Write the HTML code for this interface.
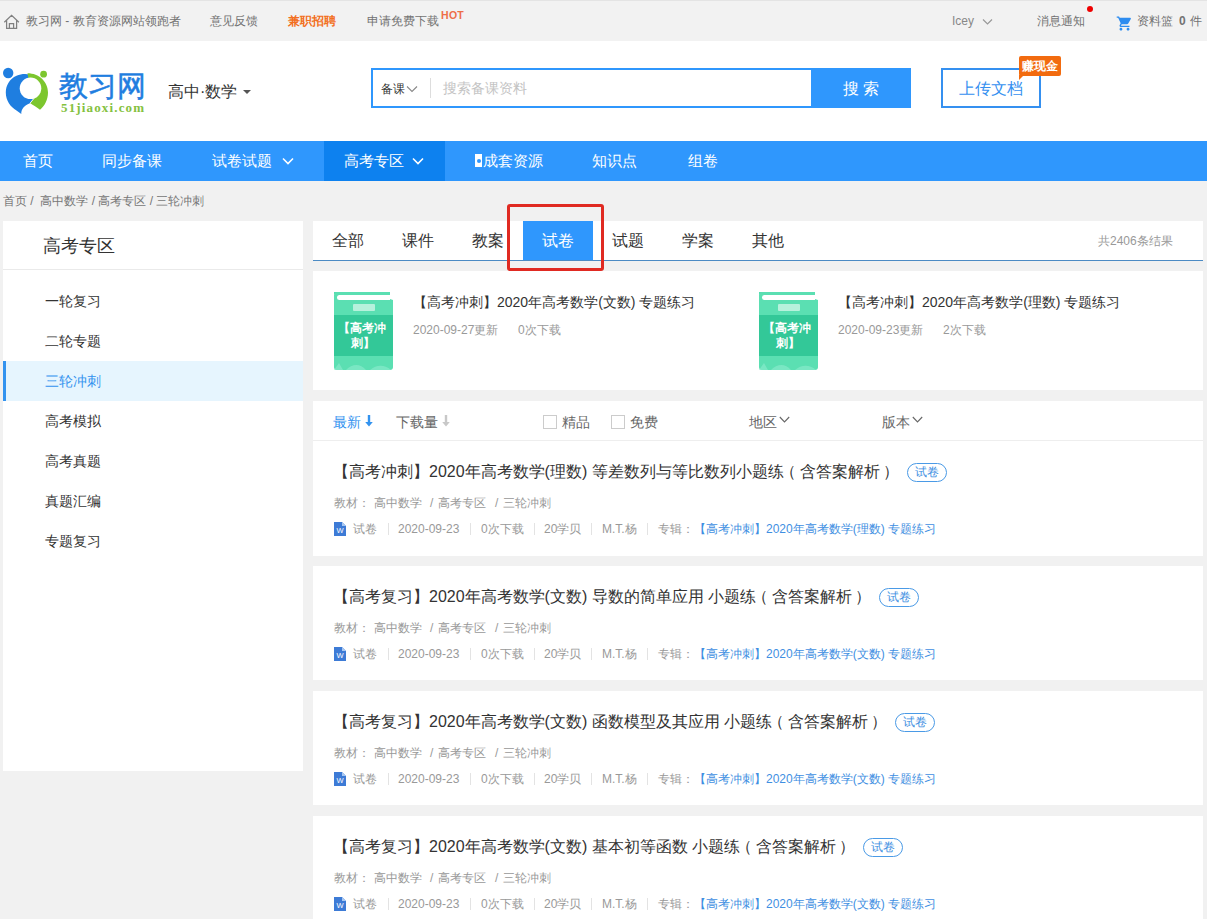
<!DOCTYPE html>
<html><head><meta charset="utf-8">
<style>
*{margin:0;padding:0;box-sizing:border-box}
html,body{width:1207px;height:919px;overflow:hidden;background:#f1f1f1;font-family:"Liberation Sans",sans-serif;color:#333}
.a{position:absolute;white-space:nowrap}
#top{position:absolute;left:0;top:0;width:1207px;height:41px;background:#f2f2f2;border-top:1px solid #e4e4e4}
#top .t{position:absolute;top:0;height:41px;line-height:41px;font-size:12px;color:#737373}
#hdr{position:absolute;left:0;top:41px;width:1207px;height:100px;background:#fff}
#nav{position:absolute;left:0;top:141px;width:1207px;height:40px;background:#2f97fd}
#nav .n{position:absolute;top:0;height:40px;line-height:40px;font-size:15px;color:#fff}
.panel{position:absolute;background:#fff}
</style></head><body>

<div id="top">
  <svg class="a" style="left:0;top:8px" width="30" height="26" viewBox="0 0 30 26"><path d="M4.3 13.2 L11.6 6.4 L18.9 13.2 M6.6 11.2 V19.3 H16.6 V11.2 M9.4 19.3 V14.6 H13.6 V19.3" fill="none" stroke="#808080" stroke-width="1.25"/></svg>
  <div class="t" style="left:26px">教习网 - 教育资源网站领跑者</div>
  <div class="t" style="left:210px">意见反馈</div>
  <div class="t" style="left:288px;color:#f26f21;font-weight:bold">兼职招聘</div>
  <div class="t" style="left:367px">申请免费下载</div>
  <div class="a" style="left:441px;top:7.8px;font-size:10.5px;line-height:12px;font-weight:bold;letter-spacing:0.3px;color:#ee6e48">HOT</div>
  <div class="t" style="left:952px;color:#888">Icey</div>
  <svg class="a" style="left:982px;top:17px" width="11" height="8" viewBox="0 0 11 8"><path d="M1 1.5 L5.5 6 L10 1.5" fill="none" stroke="#999" stroke-width="1.2"/></svg>
  <div class="t" style="left:1037px">消息通知</div>
  <div class="a" style="left:1087px;top:5px;width:6px;height:6px;border-radius:50%;background:#e00"></div>
  <svg class="a" style="left:1116px;top:13.5px" width="17" height="17" viewBox="0 0 24 24"><path fill="#2d8cf0" d="M7 18c-1.1 0-1.99.9-1.99 2S5.9 22 7 22s2-.9 2-2-.9-2-2-2zM1 2v2h2l3.6 7.59-1.35 2.45c-.16.28-.25.61-.25.96 0 1.1.9 2 2 2h12v-2H7.42c-.14 0-.25-.11-.25-.25l.03-.12.9-1.63h7.450c.75 0 1.41-.41 1.75-1.03l3.58-6.49c.08-.14.12-.31.12-.48 0-.55-.45-1-1-1H5.21l-.94-2H1zm16 16c-1.1 0-1.99.9-1.99 2s.89 2 1.99 2 2-.9 2-2-.9-2-2-2z"/></svg>
  <div class="t" style="left:1137px">资料篮</div><div class="t" style="left:1179px;font-weight:bold">0</div><div class="t" style="left:1190px">件</div>
</div>

<div id="hdr">
  <svg class="a" style="left:0;top:21px" width="52" height="56" viewBox="0 0 52 56">
    <path d="M34 14 C28.5 11.3 22 11.3 16.5 13.8 C9.5 17 5.8 23.5 5.8 30.5 C5.8 38.5 10.5 45 16.5 48.5 L21.3 52 C21 47.5 24 43.5 29.8 41.2 L34.5 35.5 L30 26 Z" fill="#1f7ee0"/>
    <path d="M27.5 11.2 C39 11.3 48 19.5 48 30.5 C48 38 44.5 44 40 47.8 C37 45.5 33 43 30.3 41.3 L34.5 35.5 L30 26 Z" fill="#7cc62e"/>
    <circle cx="30.5" cy="26.3" r="10.8" fill="#fff"/>
    <path d="M34.5 35.8 L30.2 41" stroke="#fff" stroke-width="0.8"/>
    <circle cx="8.2" cy="11" r="5.2" fill="#1f7ee0"/>
    <circle cx="43.6" cy="12.2" r="3.4" fill="#7cc62e"/>
  </svg>
  <div class="a" style="left:59px;top:29px;font-size:28.5px;line-height:32px;color:#1f7ee0;letter-spacing:0px;-webkit-text-stroke:0.5px #1f7ee0">教习网</div>
  <div class="a" style="left:61px;top:59.5px;font-family:'Liberation Serif',serif;font-weight:bold;font-size:13px;line-height:14px;letter-spacing:1.15px;color:#84c13e">51jiaoxi.com</div>
  <div class="a" style="left:168px;top:41px;font-size:16px;line-height:20px;color:#333">高中·数学</div>
  <div class="a" style="left:243px;top:49px;width:0;height:0;border-left:4px solid transparent;border-right:4px solid transparent;border-top:4px solid #555"></div>
  <div class="a" style="left:371px;top:27px;width:540px;height:40px;border:2px solid #2f97fd;background:#fff"></div>
  <div class="a" style="left:381px;top:40px;font-size:12px;line-height:16px;color:#333">备课</div>
  <svg class="a" style="left:406px;top:44px" width="12" height="8" viewBox="0 0 12 8"><path d="M1 1.5 L6 6.5 L11 1.5" fill="none" stroke="#888" stroke-width="1.1"/></svg>
  <div class="a" style="left:430px;top:37px;width:1px;height:20px;background:#ddd"></div>
  <div class="a" style="left:443px;top:38px;font-size:14px;line-height:18px;color:#c4c4c4">搜索备课资料</div>
  <div class="a" style="left:811px;top:27px;width:100px;height:40px;background:#2f97fd;color:#fff;font-size:16px;line-height:42px;text-align:center;letter-spacing:4px;padding-left:4px">搜索</div>
  <div class="a" style="left:941px;top:27px;width:100px;height:40px;border:2px solid #3590f0;color:#3590f0;font-size:16px;line-height:38px;text-align:center">上传文档</div>
  <div class="a" style="left:1019px;top:15px;width:42px;height:20px;background:#f26b0f;border-radius:2px;color:#fff;font-size:12px;line-height:20px;text-align:center;font-weight:bold">赚现金</div>
  <div class="a" style="left:1019px;top:34px;width:0;height:0;border-top:5px solid #f26b0f;border-right:5px solid transparent"></div>
</div>

<div id="nav">
  <div class="n" style="left:23px">首页</div>
  <div class="n" style="left:102px">同步备课</div>
  <div class="n" style="left:212px">试卷试题</div>
  <svg class="a" style="left:282px;top:16px" width="12" height="8" viewBox="0 0 12 8"><path d="M1 1.5 L6 6.5 L11 1.5" fill="none" stroke="#fff" stroke-width="1.6"/></svg>
  <div class="a" style="left:324px;top:0;width:121px;height:40px;background:#0d81ef"></div>
  <div class="n" style="left:344px">高考专区</div>
  <svg class="a" style="left:412px;top:16px" width="12" height="8" viewBox="0 0 12 8"><path d="M1 1.5 L6 6.5 L11 1.5" fill="none" stroke="#fff" stroke-width="1.6"/></svg>
  <div class="a" style="left:475px;top:13px;width:7px;height:13px;background:#fff"></div><div class="a" style="left:476.5px;top:17.5px;width:4px;height:4px;border-radius:50%;background:#2f97fd"></div>
  <div class="n" style="left:483px">成套资源</div>
  <div class="n" style="left:592px">知识点</div>
  <div class="n" style="left:688px">组卷</div>
</div>

<div class="a" style="left:3px;top:193px;font-size:12px;line-height:16px;color:#777">首页 / &nbsp;高中数学 / 高考专区 / 三轮冲刺</div>


<!-- sidebar -->
<div class="panel" style="left:3px;top:221px;width:300px;height:550px">
<div class="a" style="left:40px;top:14px;font-size:18px;line-height:22px;color:#333;">高考专区</div>
<div class="a" style="left:0;top:48px;width:300px;height:1px;background:#eaeaea"></div>
<div class="a" style="left:42px;top:72px;font-size:14px;line-height:16px;color:#333;">一轮复习</div>
<div class="a" style="left:42px;top:112px;font-size:14px;line-height:16px;color:#333;">二轮专题</div>
<div class="a" style="left:0;top:140px;width:300px;height:40px;background:#e6f5fe;border-left:3px solid #3393ef"></div>
<div class="a" style="left:42px;top:152px;font-size:14px;line-height:16px;color:#3393ef;">三轮冲刺</div>
<div class="a" style="left:42px;top:192px;font-size:14px;line-height:16px;color:#333;">高考模拟</div>
<div class="a" style="left:42px;top:232px;font-size:14px;line-height:16px;color:#333;">高考真题</div>
<div class="a" style="left:42px;top:272px;font-size:14px;line-height:16px;color:#333;">真题汇编</div>
<div class="a" style="left:42px;top:312px;font-size:14px;line-height:16px;color:#333;">专题复习</div>
</div>
<div class="panel" style="left:313px;top:221px;width:890px;height:40px;border-bottom:1px solid #4c8bc4">
<div class="a" style="left:210px;top:0px;width:70px;height:39px;background:#2f97fd"></div>
<div class="a" style="left:19px;top:11px;font-size:16px;line-height:18px;color:#333;">全部</div>
<div class="a" style="left:89px;top:11px;font-size:16px;line-height:18px;color:#333;">课件</div>
<div class="a" style="left:159px;top:11px;font-size:16px;line-height:18px;color:#333;">教案</div>
<div class="a" style="left:229px;top:11px;font-size:16px;line-height:18px;color:#fff;">试卷</div>
<div class="a" style="left:299px;top:11px;font-size:16px;line-height:18px;color:#333;">试题</div>
<div class="a" style="left:369px;top:11px;font-size:16px;line-height:18px;color:#333;">学案</div>
<div class="a" style="left:439px;top:11px;font-size:16px;line-height:18px;color:#333;">其他</div>
<div class="a" style="left:785px;top:13px;font-size:12px;line-height:14px;color:#999;">共2406条结果</div>
</div>
<div class="a" style="left:507px;top:204px;width:97px;height:67px;border:3px solid #e02a22;border-radius:3px"></div>
<div class="panel" style="left:313px;top:271px;width:890px;height:119px">
<div class="a" style="left:21px;top:21px;width:59px;height:78px">
    <div class="a" style="left:0;top:0;width:56px;height:2px;background:#52dcae"></div>
    <div class="a" style="left:0;top:0;width:59px;height:78px;background:#5bdfb2;border-radius:3px 4px 3px 3px;clip-path:polygon(0 0,56px 0,56px 7px,59px 8px,59px 78px,0 78px)"></div>
    <div class="a" style="left:3px;top:2.5px;width:53px;height:5px;background:#fff;border-radius:3px 0 0 3px"></div>
    <div class="a" style="left:0;top:23px;width:59px;height:41px;background:#33c898"></div>
    <div class="a" style="left:19px;top:12px;width:22px;height:7px;background:#d6f7ea;opacity:.75;border-radius:1px"></div>
    <div class="a" style="left:-2px;top:29px;width:59px;font-size:12px;line-height:15px;color:#fff;text-align:center;white-space:normal;font-weight:bold">【高考冲<br>&nbsp;刺】</div>
    <svg class="a" style="left:0;top:64px" width="59" height="14" viewBox="0 0 59 14"><path d="M0 14 L5 7 L9 14 Z M12 14 C18 8 26 7 32 14 Z M36 14 C42 9 50 8 57 14 Z" fill="#86eacb" opacity=".7"/></svg>
  </div>
<div class="a" style="left:100px;top:22px;font-size:14px;line-height:18px;color:#333;">【高考冲刺】2020年高考数学(文数) 专题练习</div>
<div class="a" style="left:100px;top:52px;font-size:12px;line-height:14px;color:#999;">2020-09-27更新</div>
<div class="a" style="left:205px;top:52px;font-size:12px;line-height:14px;color:#999;">0次下载</div>
<div class="a" style="left:446px;top:21px;width:59px;height:78px">
    <div class="a" style="left:0;top:0;width:56px;height:2px;background:#52dcae"></div>
    <div class="a" style="left:0;top:0;width:59px;height:78px;background:#5bdfb2;border-radius:3px 4px 3px 3px;clip-path:polygon(0 0,56px 0,56px 7px,59px 8px,59px 78px,0 78px)"></div>
    <div class="a" style="left:3px;top:2.5px;width:53px;height:5px;background:#fff;border-radius:3px 0 0 3px"></div>
    <div class="a" style="left:0;top:23px;width:59px;height:41px;background:#33c898"></div>
    <div class="a" style="left:19px;top:12px;width:22px;height:7px;background:#d6f7ea;opacity:.75;border-radius:1px"></div>
    <div class="a" style="left:-2px;top:29px;width:59px;font-size:12px;line-height:15px;color:#fff;text-align:center;white-space:normal;font-weight:bold">【高考冲<br>&nbsp;刺】</div>
    <svg class="a" style="left:0;top:64px" width="59" height="14" viewBox="0 0 59 14"><path d="M0 14 L5 7 L9 14 Z M12 14 C18 8 26 7 32 14 Z M36 14 C42 9 50 8 57 14 Z" fill="#86eacb" opacity=".7"/></svg>
  </div>
<div class="a" style="left:525px;top:22px;font-size:14px;line-height:18px;color:#333;">【高考冲刺】2020年高考数学(理数) 专题练习</div>
<div class="a" style="left:525px;top:52px;font-size:12px;line-height:14px;color:#999;">2020-09-23更新</div>
<div class="a" style="left:630px;top:52px;font-size:12px;line-height:14px;color:#999;">2次下载</div>
</div>
<div class="panel" style="left:313px;top:401px;width:890px;height:155px">
<div class="a" style="left:20px;top:13px;font-size:14px;line-height:16px;color:#3393ef;">最新</div>
<svg class="a" style="left:52px;top:14px" width="8" height="12" viewBox="0 0 8 12"><path d="M2.8 0 H5.2 V7 H7.8 L4 11.5 L0.2 7 H2.8 Z" fill="#3393ef"/></svg>
<div class="a" style="left:83px;top:13px;font-size:14px;line-height:16px;color:#666;">下载量</div>
<svg class="a" style="left:129px;top:14px" width="8" height="12" viewBox="0 0 8 12"><path d="M2.8 0 H5.2 V7 H7.8 L4 11.5 L0.2 7 H2.8 Z" fill="#c8c8c8"/></svg>
<div class="a" style="left:230px;top:14px;width:14px;height:14px;border:1px solid #ccc;background:#fff"></div>
<div class="a" style="left:249px;top:13px;font-size:14px;line-height:16px;color:#666;">精品</div>
<div class="a" style="left:298px;top:14px;width:14px;height:14px;border:1px solid #ccc;background:#fff"></div>
<div class="a" style="left:317px;top:13px;font-size:14px;line-height:16px;color:#666;">免费</div>
<div class="a" style="left:436px;top:13px;font-size:14px;line-height:16px;color:#666;">地区</div>
<svg class="a" style="left:466px;top:15px" width="11" height="8" viewBox="0 0 11 8"><path d="M0.8 1 L5.5 6 L10.2 1" fill="none" stroke="#666" stroke-width="1.1"/></svg>
<div class="a" style="left:569px;top:13px;font-size:14px;line-height:16px;color:#666;">版本</div>
<svg class="a" style="left:599px;top:15px" width="11" height="8" viewBox="0 0 11 8"><path d="M0.8 1 L5.5 6 L10.2 1" fill="none" stroke="#666" stroke-width="1.1"/></svg>
<div class="a" style="left:0;top:39px;width:890px;height:1px;background:#eee"></div>
<div class="a" style="left:20px;top:61px;font-size:16px;line-height:20px;color:#333;">【高考冲刺】2020年高考数学(理数) 等差数列与等比数列小题练<span style="position:relative;left:-4px">（</span>含答案解析<span style="position:relative;left:3px">）</span></div>
<div class="a" style="left:594px;top:62px;width:40px;height:19px;border:1px solid #4a9ae6;border-radius:10px;font-size:12px;line-height:17px;color:#3f8fe2;text-align:center">试卷</div>
<div class="a" style="left:21px;top:95px;font-size:12px;line-height:14px;color:#999;">教材：</div>
<div class="a" style="left:61px;top:95px;font-size:12px;line-height:14px;color:#999;">高中数学</div>
<div class="a" style="left:117px;top:95px;font-size:12px;line-height:14px;color:#999;">/</div>
<div class="a" style="left:125px;top:95px;font-size:12px;line-height:14px;color:#999;">高考专区</div>
<div class="a" style="left:182px;top:95px;font-size:12px;line-height:14px;color:#999;">/</div>
<div class="a" style="left:190px;top:95px;font-size:12px;line-height:14px;color:#999;">三轮冲刺</div>
<svg class="a" style="left:21px;top:121px" width="12" height="14" viewBox="0 0 12 14"><path d="M0 0 H8 L12 4 V14 H0 Z" fill="#3d7bd6"/><path d="M8 0 L12 4 H8 Z" fill="#a9c8f2"/><text x="6" y="10.6" font-size="7.5" font-family="Liberation Sans" fill="#fff" text-anchor="middle">W</text></svg>
<div class="a" style="left:40px;top:121px;font-size:12px;line-height:14px;color:#999;">试卷</div>
<div class="a" style="left:85px;top:121px;font-size:12px;line-height:14px;color:#999;">2020-09-23</div>
<div class="a" style="left:168px;top:121px;font-size:12px;line-height:14px;color:#999;">0次下载</div>
<div class="a" style="left:231px;top:121px;font-size:12px;line-height:14px;color:#999;">20学贝</div>
<div class="a" style="left:289px;top:121px;font-size:12px;line-height:14px;color:#999;">M.T.杨</div>
<div class="a" style="left:345px;top:121px;font-size:12px;line-height:14px;color:#999;">专辑：</div>
<div class="a" style="left:75px;top:122px;width:1px;height:12px;background:#e3e3e3"></div>
<div class="a" style="left:157px;top:122px;width:1px;height:12px;background:#e3e3e3"></div>
<div class="a" style="left:221px;top:122px;width:1px;height:12px;background:#e3e3e3"></div>
<div class="a" style="left:278px;top:122px;width:1px;height:12px;background:#e3e3e3"></div>
<div class="a" style="left:334px;top:122px;width:1px;height:12px;background:#e3e3e3"></div>
<div class="a" style="left:381px;top:121px;font-size:12px;line-height:14px;color:#3f8fe2;">【高考冲刺】2020年高考数学(理数) 专题练习</div>
</div>
<div class="panel" style="left:313px;top:566px;width:890px;height:114px">
<div class="a" style="left:20px;top:21px;font-size:16px;line-height:20px;color:#333;">【高考复习】2020年高考数学(文数) 导数的简单应用 小题练<span style="position:relative;left:-4px">（</span>含答案解析<span style="position:relative;left:3px">）</span></div>
<div class="a" style="left:566px;top:22px;width:40px;height:19px;border:1px solid #4a9ae6;border-radius:10px;font-size:12px;line-height:17px;color:#3f8fe2;text-align:center">试卷</div>
<div class="a" style="left:21px;top:55px;font-size:12px;line-height:14px;color:#999;">教材：</div>
<div class="a" style="left:61px;top:55px;font-size:12px;line-height:14px;color:#999;">高中数学</div>
<div class="a" style="left:117px;top:55px;font-size:12px;line-height:14px;color:#999;">/</div>
<div class="a" style="left:125px;top:55px;font-size:12px;line-height:14px;color:#999;">高考专区</div>
<div class="a" style="left:182px;top:55px;font-size:12px;line-height:14px;color:#999;">/</div>
<div class="a" style="left:190px;top:55px;font-size:12px;line-height:14px;color:#999;">三轮冲刺</div>
<svg class="a" style="left:21px;top:81px" width="12" height="14" viewBox="0 0 12 14"><path d="M0 0 H8 L12 4 V14 H0 Z" fill="#3d7bd6"/><path d="M8 0 L12 4 H8 Z" fill="#a9c8f2"/><text x="6" y="10.6" font-size="7.5" font-family="Liberation Sans" fill="#fff" text-anchor="middle">W</text></svg>
<div class="a" style="left:40px;top:81px;font-size:12px;line-height:14px;color:#999;">试卷</div>
<div class="a" style="left:85px;top:81px;font-size:12px;line-height:14px;color:#999;">2020-09-23</div>
<div class="a" style="left:168px;top:81px;font-size:12px;line-height:14px;color:#999;">0次下载</div>
<div class="a" style="left:231px;top:81px;font-size:12px;line-height:14px;color:#999;">20学贝</div>
<div class="a" style="left:289px;top:81px;font-size:12px;line-height:14px;color:#999;">M.T.杨</div>
<div class="a" style="left:345px;top:81px;font-size:12px;line-height:14px;color:#999;">专辑：</div>
<div class="a" style="left:75px;top:82px;width:1px;height:12px;background:#e3e3e3"></div>
<div class="a" style="left:157px;top:82px;width:1px;height:12px;background:#e3e3e3"></div>
<div class="a" style="left:221px;top:82px;width:1px;height:12px;background:#e3e3e3"></div>
<div class="a" style="left:278px;top:82px;width:1px;height:12px;background:#e3e3e3"></div>
<div class="a" style="left:334px;top:82px;width:1px;height:12px;background:#e3e3e3"></div>
<div class="a" style="left:381px;top:81px;font-size:12px;line-height:14px;color:#3f8fe2;">【高考冲刺】2020年高考数学(文数) 专题练习</div>
</div>
<div class="panel" style="left:313px;top:691px;width:890px;height:114px">
<div class="a" style="left:20px;top:21px;font-size:16px;line-height:20px;color:#333;">【高考复习】2020年高考数学(文数) 函数模型及其应用 小题练<span style="position:relative;left:-4px">（</span>含答案解析<span style="position:relative;left:3px">）</span></div>
<div class="a" style="left:582px;top:22px;width:40px;height:19px;border:1px solid #4a9ae6;border-radius:10px;font-size:12px;line-height:17px;color:#3f8fe2;text-align:center">试卷</div>
<div class="a" style="left:21px;top:55px;font-size:12px;line-height:14px;color:#999;">教材：</div>
<div class="a" style="left:61px;top:55px;font-size:12px;line-height:14px;color:#999;">高中数学</div>
<div class="a" style="left:117px;top:55px;font-size:12px;line-height:14px;color:#999;">/</div>
<div class="a" style="left:125px;top:55px;font-size:12px;line-height:14px;color:#999;">高考专区</div>
<div class="a" style="left:182px;top:55px;font-size:12px;line-height:14px;color:#999;">/</div>
<div class="a" style="left:190px;top:55px;font-size:12px;line-height:14px;color:#999;">三轮冲刺</div>
<svg class="a" style="left:21px;top:81px" width="12" height="14" viewBox="0 0 12 14"><path d="M0 0 H8 L12 4 V14 H0 Z" fill="#3d7bd6"/><path d="M8 0 L12 4 H8 Z" fill="#a9c8f2"/><text x="6" y="10.6" font-size="7.5" font-family="Liberation Sans" fill="#fff" text-anchor="middle">W</text></svg>
<div class="a" style="left:40px;top:81px;font-size:12px;line-height:14px;color:#999;">试卷</div>
<div class="a" style="left:85px;top:81px;font-size:12px;line-height:14px;color:#999;">2020-09-23</div>
<div class="a" style="left:168px;top:81px;font-size:12px;line-height:14px;color:#999;">0次下载</div>
<div class="a" style="left:231px;top:81px;font-size:12px;line-height:14px;color:#999;">20学贝</div>
<div class="a" style="left:289px;top:81px;font-size:12px;line-height:14px;color:#999;">M.T.杨</div>
<div class="a" style="left:345px;top:81px;font-size:12px;line-height:14px;color:#999;">专辑：</div>
<div class="a" style="left:75px;top:82px;width:1px;height:12px;background:#e3e3e3"></div>
<div class="a" style="left:157px;top:82px;width:1px;height:12px;background:#e3e3e3"></div>
<div class="a" style="left:221px;top:82px;width:1px;height:12px;background:#e3e3e3"></div>
<div class="a" style="left:278px;top:82px;width:1px;height:12px;background:#e3e3e3"></div>
<div class="a" style="left:334px;top:82px;width:1px;height:12px;background:#e3e3e3"></div>
<div class="a" style="left:381px;top:81px;font-size:12px;line-height:14px;color:#3f8fe2;">【高考冲刺】2020年高考数学(文数) 专题练习</div>
</div>
<div class="panel" style="left:313px;top:816px;width:890px;height:114px">
<div class="a" style="left:20px;top:21px;font-size:16px;line-height:20px;color:#333;">【高考复习】2020年高考数学(文数) 基本初等函数 小题练<span style="position:relative;left:-4px">（</span>含答案解析<span style="position:relative;left:3px">）</span></div>
<div class="a" style="left:550px;top:22px;width:40px;height:19px;border:1px solid #4a9ae6;border-radius:10px;font-size:12px;line-height:17px;color:#3f8fe2;text-align:center">试卷</div>
<div class="a" style="left:21px;top:55px;font-size:12px;line-height:14px;color:#999;">教材：</div>
<div class="a" style="left:61px;top:55px;font-size:12px;line-height:14px;color:#999;">高中数学</div>
<div class="a" style="left:117px;top:55px;font-size:12px;line-height:14px;color:#999;">/</div>
<div class="a" style="left:125px;top:55px;font-size:12px;line-height:14px;color:#999;">高考专区</div>
<div class="a" style="left:182px;top:55px;font-size:12px;line-height:14px;color:#999;">/</div>
<div class="a" style="left:190px;top:55px;font-size:12px;line-height:14px;color:#999;">三轮冲刺</div>
<svg class="a" style="left:21px;top:81px" width="12" height="14" viewBox="0 0 12 14"><path d="M0 0 H8 L12 4 V14 H0 Z" fill="#3d7bd6"/><path d="M8 0 L12 4 H8 Z" fill="#a9c8f2"/><text x="6" y="10.6" font-size="7.5" font-family="Liberation Sans" fill="#fff" text-anchor="middle">W</text></svg>
<div class="a" style="left:40px;top:81px;font-size:12px;line-height:14px;color:#999;">试卷</div>
<div class="a" style="left:85px;top:81px;font-size:12px;line-height:14px;color:#999;">2020-09-23</div>
<div class="a" style="left:168px;top:81px;font-size:12px;line-height:14px;color:#999;">0次下载</div>
<div class="a" style="left:231px;top:81px;font-size:12px;line-height:14px;color:#999;">20学贝</div>
<div class="a" style="left:289px;top:81px;font-size:12px;line-height:14px;color:#999;">M.T.杨</div>
<div class="a" style="left:345px;top:81px;font-size:12px;line-height:14px;color:#999;">专辑：</div>
<div class="a" style="left:75px;top:82px;width:1px;height:12px;background:#e3e3e3"></div>
<div class="a" style="left:157px;top:82px;width:1px;height:12px;background:#e3e3e3"></div>
<div class="a" style="left:221px;top:82px;width:1px;height:12px;background:#e3e3e3"></div>
<div class="a" style="left:278px;top:82px;width:1px;height:12px;background:#e3e3e3"></div>
<div class="a" style="left:334px;top:82px;width:1px;height:12px;background:#e3e3e3"></div>
<div class="a" style="left:381px;top:81px;font-size:12px;line-height:14px;color:#3f8fe2;">【高考冲刺】2020年高考数学(文数) 专题练习</div>
</div>
</body></html>
